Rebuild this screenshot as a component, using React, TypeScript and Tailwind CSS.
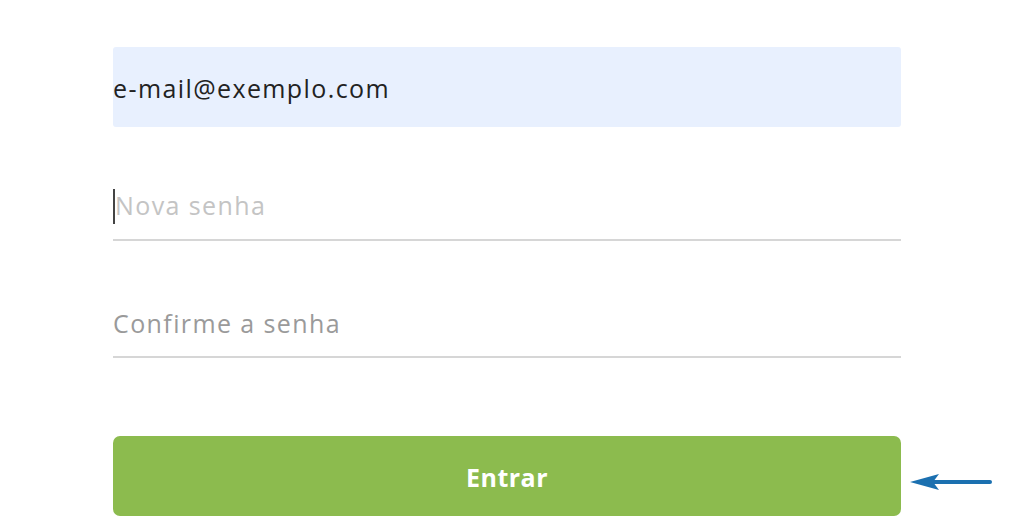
export default function App() {
  return (
    <div className="h-[529px] w-[1024px] bg-white" style={{ fontFamily: '"Open Sans", sans-serif' }}>
      <div className="flex w-[1024px] items-start pl-[113px] pt-[47px]">
        <div className="flex w-[788px] flex-col">
          <div className="flex h-[80px] items-center rounded-[3px] bg-[#e8f0fe] pt-[4px] text-[25px] tracking-[1.4px] text-[#222]">
            e-mail@exemplo.com
          </div>

          <div className="mt-[36px] flex h-[78px] items-center border-b-2 border-[#d6d6d6] pt-[10px]">
            <span className="h-[35px] w-[2px] bg-[#444]" />
            <span className="text-[25px] tracking-[1.4px] text-[#c4c4c4]">Nova senha</span>
          </div>

          <div className="mt-[38px] flex h-[79px] items-center border-b-2 border-[#d6d6d6] pt-[12px] text-[25px] tracking-[1.4px] text-[#9a9a9a]">
            Confirme a senha
          </div>

          <div className="mt-[78px] flex items-center">
            <button className="flex h-[80px] w-[788px] items-center justify-center rounded-[7px] bg-[#8cbb4e] pt-[4px] text-[25px] font-bold tracking-[0.5px] text-white">
              Entrar
            </button>
          </div>
        </div>
        <div className="ml-[8px] mt-[420px] flex h-[30px] items-center">
          <svg width="84" height="24" viewBox="0 0 84 24">
            <path d="M10 12 L81 12" stroke="#1b70b0" strokeWidth="4" strokeLinecap="round" />
            <path d="M1 12 L30 4 L24 12 L30 20 Z" fill="#1b70b0" />
          </svg>
        </div>
      </div>
    </div>
  )
}
